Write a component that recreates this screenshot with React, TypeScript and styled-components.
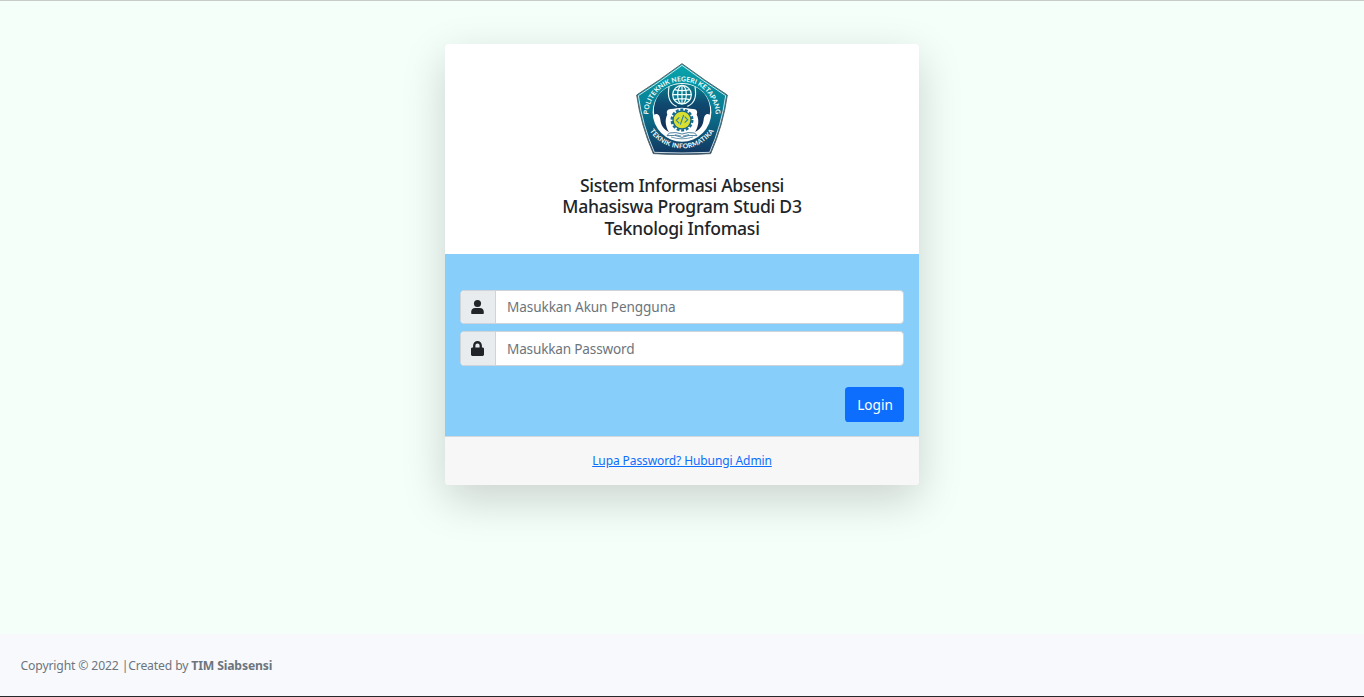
import React from "react";
import styled, { createGlobalStyle } from "styled-components";

const GlobalStyle = createGlobalStyle`
  *, *::before, *::after { box-sizing: border-box; }
  body {
    margin: 0;
    background: #f5fffa;
    color: #212529;
    font-family: "Segoe UI", "Noto Sans", "Open Sans", sans-serif;
    font-size: 14.4px;
    line-height: 1.5;
    overflow: hidden;
  }
`;

const Page = styled.div`
  display: flex;
  flex-direction: column;
  height: 697px;
  border-top: 1px solid #c8cbc9;
  border-bottom: 1px solid #28292b;
`;

const Main = styled.main`
  flex: 1;
  display: flex;
  justify-content: center;
  align-items: flex-start;
  padding-top: 43px;
`;

const Card = styled.section`
  width: 474px;
  height: 441px;
  display: flex;
  flex-direction: column;
  border-radius: 4px;
  background: #fff;
  box-shadow: 0 14.4px 43.2px rgba(0, 0, 0, 0.175);
`;

const CardHeader = styled.header`
  height: 210px;
  padding-top: 19px;
  display: flex;
  flex-direction: column;
  align-items: center;
`;

const Title = styled.h1`
  margin: 19.65px 0 0;
  font-size: 17.6px;
  font-weight: 500;
  line-height: 21.6px;
  text-align: center;
`;

const TitleLine = styled.span<{ $spacing: number }>`
  display: block;
  white-space: nowrap;
  letter-spacing: ${(p) => p.$spacing}px;
`;

const Form = styled.form`
  height: 182px;
  padding: 36px 15px 0;
  background: #87cefa;
  display: flex;
  flex-direction: column;
`;

const InputGroup = styled.label<{ $height: number }>`
  display: flex;
  height: ${(p) => p.$height}px;
  margin-bottom: 7px;
  border: 1px solid #ced4da;
  border-radius: 4px;
  background: #fff;
  overflow: hidden;
`;

const Addon = styled.span`
  width: 35px;
  padding-right: 1px;
  display: flex;
  align-items: center;
  justify-content: center;
  background: #e9ecef;
  border-right: 1px solid #ced4da;
`;

const Input = styled.input<{ $spacing: number; $drop?: number }>`
  flex: 1;
  min-width: 0;
  border: 0;
  outline: 0;
  padding: ${(p) => p.$drop ?? 0}px 11px 0;
  background: transparent;
  font: inherit;
  font-size: 13.6px;
  letter-spacing: ${(p) => p.$spacing}px;
  &::placeholder { color: #6c757d; opacity: 1; }
`;

const LoginButton = styled.button`
  align-self: flex-end;
  width: 59px;
  height: 35px;
  margin-top: 14px;
  padding: 1px 0 0 1px;
  border: 0;
  border-radius: 3.6px;
  background: #0d6efd;
  color: #fff;
  font: inherit;
  font-size: 13.6px;
`;

const CardFooter = styled.footer`
  flex: 1;
  display: flex;
  align-items: center;
  justify-content: center;
  border-top: 1px solid #d5d8da;
  border-radius: 0 0 4px 4px;
  background: #f7f7f7;
`;

const HelpLink = styled.a`
  color: #0d6efd;
  font-size: 12px;
  letter-spacing: -0.1px;
  text-decoration: underline;
`;

const PageFooter = styled.footer`
  height: 62px;
  padding: 2px 20.5px 0;
  display: flex;
  align-items: center;
  background: #f8f9fc;
  color: #6c757d;
  font-size: 12.2px;
  letter-spacing: -0.15px;
  white-space: pre;
`;

const UserIcon = () => (
  <svg width="13" height="14.4" viewBox="0 0 448 512" fill="#212529">
    <circle cx="224" cy="126" r="126" />
    <path d="M134 288h180c74 0 134 60 134 134v42c0 27-21 48-48 48H48c-27 0-48-21-48-48v-42c0-74 60-134 134-134z" />
  </svg>
);

const LockIcon = () => (
  <svg width="13" height="15" viewBox="0 0 448 512" fill="#212529">
    <path d="M72 224v-72C72 68 140 0 224 0s152 68 152 152v72h24c26.500 0 48 21.500 48 48v192c0 26.500-21.500 48-48 48H48c-26.500 0-48-21.500-48-48V272c0-26.500 21.500-48 48-48h24zm80 0h144v-72c0-39.700-32.300-72-72-72s-72 32.300-72 72v72z" />
  </svg>
);

const Logo = () => (
  <svg width="92" height="92" viewBox="18 15 276 276" role="img">
    <defs>
      <linearGradient id="shield" x1="0" y1="0" x2="0" y2="1">
        <stop offset="0" stopColor="#08a7ad" />
        <stop offset="0.45" stopColor="#087f96" />
        <stop offset="1" stopColor="#123660" />
      </linearGradient>
      <linearGradient id="figure" x1="0" y1="0" x2="0" y2="1">
        <stop offset="0" stopColor="#08808f" />
        <stop offset="0.4" stopColor="#0f4a70" />
        <stop offset="1" stopColor="#142d55" />
      </linearGradient>
      <path id="arcTop" d="M55 172 A101 102 0 1 1 257 172" />
      <path id="arcBottom" d="M59 218 A115 115 0 0 0 253 218" />
    </defs>
    <path
      d="M156 17 Q222 66 292 111 Q279 203 242 287 Q156 292 70 287 Q33 203 20 111 Q90 66 156 17Z"
      fill="url(#shield)"
      stroke="#56656b"
      strokeWidth="3"
    />
    <path
      d="M156 22 Q222 71 287 113 Q275 201 239 283 Q156 287 73 283 Q37 201 25 113 Q90 71 156 22Z"
      fill="none"
      stroke="#eefafa"
      strokeWidth="2.500"
    />
    <circle cx="156" cy="163" r="88" fill="#fff" />
    <path
      d="M156 78 C122 78 88 96 77 128 C72 143 70 154 73 170 C82 164 90 172 91 185 C93 202 101 214 117 222 C106 205 104 184 112 170 C108 160 112 154 122 153 C136 152 145 149 156 149 C167 149 176 152 190 153 C200 154 204 160 200 170 C208 184 206 205 195 222 C211 214 219 202 221 185 C222 172 230 164 239 170 C242 154 240 143 235 128 C224 96 190 78 156 78Z"
      fill="url(#figure)"
    />
    <path d="M117 86 C111 120 119 137 140 145 M195 86 C201 120 193 137 172 145" fill="none" stroke="#eafafb" strokeWidth="3.500" />
    <circle cx="156" cy="110" r="31" fill="#0b7890" />
    <g fill="none" stroke="#f3ffff" strokeWidth="3.500">
      <circle cx="156" cy="110" r="28" />
      <ellipse cx="156" cy="110" rx="13" ry="28" />
      <path d="M156 82V138M128 110H184M133 95Q156 101 179 95M133 125Q156 119 179 125" />
    </g>
    <circle cx="156" cy="186" r="31" fill="none" stroke="#176e92" strokeWidth="7" strokeDasharray="9 5" />
    <circle cx="156" cy="186" r="27" fill="#d8df31" stroke="#176584" strokeWidth="4" />
    <path d="M148 178L139 187L148 196M164 176L173 185L164 194M161 171L151 200" fill="none" stroke="#33899c" strokeWidth="3.500" />
    <path d="M118 225Q138 221 156 228Q174 221 194 225L201 233Q176 229 156 238Q136 229 111 233Z" fill="#fff" stroke="#28698b" strokeWidth="2.500" />
    <path d="M123 237Q156 248 189 237M135 230L153 234M177 230L159 234" fill="none" stroke="#28698b" strokeWidth="2" />
    <g fill="#f5ffff" fontFamily="Lato, sans-serif" fontWeight="700" fontSize="20">
      <text>
        <textPath href="#arcTop" startOffset="3" textLength="312">POLITEKNIK NEGERI KETAPANG</textPath>
      </text>
      <text>
        <textPath href="#arcBottom" startOffset="1" textLength="228">TEKNIK INFORMATIKA</textPath>
      </text>
    </g>
  </svg>
);

export default function App() {
  return (
    <>
      <GlobalStyle />
      <Page>
        <Main>
          <Card>
            <CardHeader>
              <Logo />
              <Title>
                <TitleLine $spacing={-0.37}>Sistem Informasi Absensi</TitleLine>
                <TitleLine $spacing={-0.27}>Mahasiswa Program Studi D3</TitleLine>
                <TitleLine $spacing={-0.29}>Teknologi Infomasi</TitleLine>
              </Title>
            </CardHeader>
            <Form onSubmit={(e) => e.preventDefault()}>
              <InputGroup $height={34}>
                <Addon><UserIcon /></Addon>
                <Input $spacing={-0.1} type="text" placeholder="Masukkan Akun Pengguna" />
              </InputGroup>
              <InputGroup $height={35}>
                <Addon><LockIcon /></Addon>
                <Input $spacing={-0.18} $drop={2} type="password" placeholder="Masukkan Password" />
              </InputGroup>
              <LoginButton type="submit">Login</LoginButton>
            </Form>
            <CardFooter>
              <HelpLink href="#">Lupa Password? Hubungi Admin</HelpLink>
            </CardFooter>
          </Card>
        </Main>
        <PageFooter>
          <span>Copyright © 2022 |Created by </span>
          <strong>TIM Siabsensi</strong>
        </PageFooter>
      </Page>
    </>
  );
}
